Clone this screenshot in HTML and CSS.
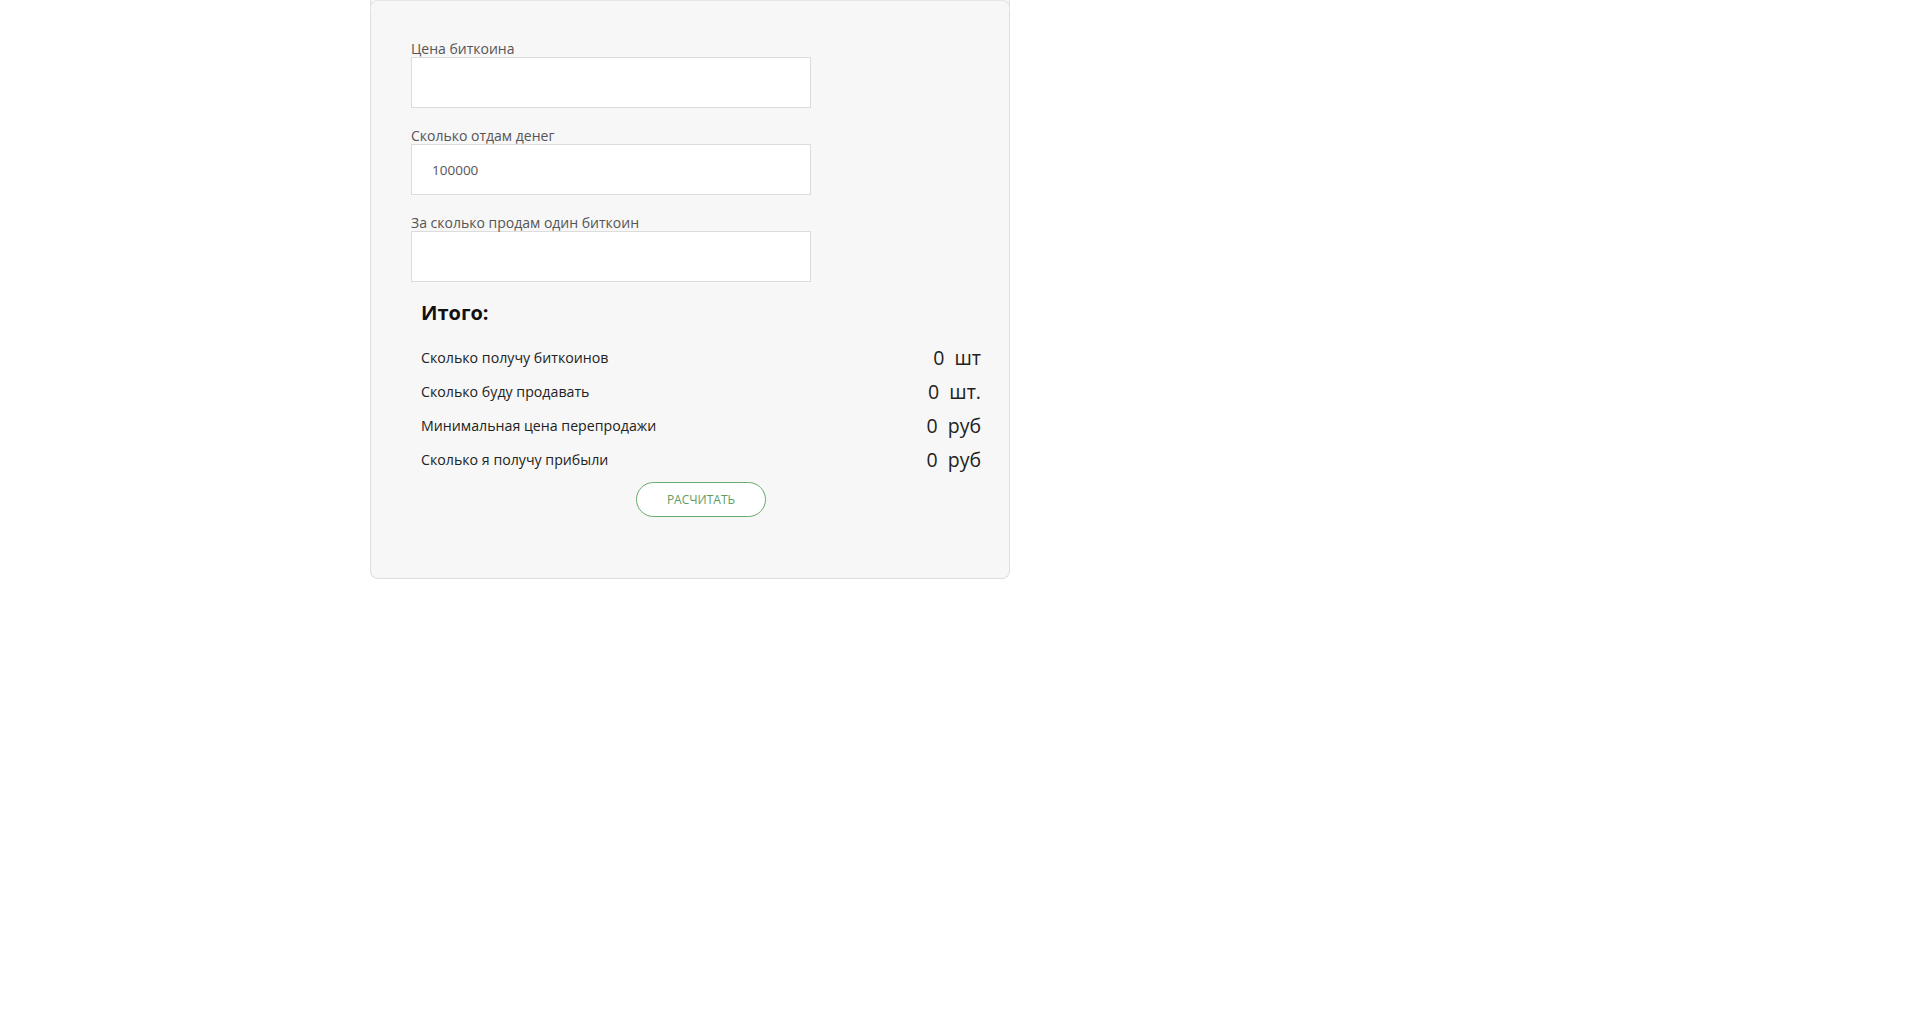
FILE: index.html
```
<!DOCTYPE html>
<html lang="ru">
<head>
<meta charset="utf-8">
<title>Калькулятор биткоина</title>
<link rel="stylesheet" href="styles.css">
</head>
<body>
<div class="card">
  <div class="field">
    <label class="label">Цена биткоина</label>
    <input class="input" type="text" value="">
  </div>
  <div class="field">
    <label class="label">Сколько отдам денег</label>
    <input class="input" type="text" value="100000">
  </div>
  <div class="field">
    <label class="label">За сколько продам один биткоин</label>
    <input class="input" type="text" value="">
  </div>
  <div class="results">
    <h2 class="total">Итого:</h2>
    <div class="row"><span class="row-label">Сколько получу биткоинов</span><span class="row-value">0&nbsp; шт</span></div>
    <div class="row"><span class="row-label">Сколько буду продавать</span><span class="row-value">0&nbsp; шт.</span></div>
    <div class="row"><span class="row-label">Минимальная цена перепродажи</span><span class="row-value">0&nbsp; руб</span></div>
    <div class="row"><span class="row-label">Сколько я получу прибыли</span><span class="row-value">0&nbsp; руб</span></div>
    <div class="actions"><button class="btn" type="button">Расчитать</button></div>
  </div>
</div>
</body>
</html>
```

FILE: styles.css
```
html, body {
  margin: 0;
  padding: 0;
  background: #ffffff;
}
body {
  font-family: "Open Sans", "Noto Sans", sans-serif;
}
.card {
  margin-left: 370px;
  width: 640px;
  box-sizing: border-box;
  min-height: 579px;
  background: #f7f7f7;
  border: 1px solid #dedede;
  border-top: none;
  border-radius: 0 0 8px 8px;
  padding: 39px 28px 60px 40px;
  position: relative;
}
.card::before {
  content: "";
  position: absolute;
  left: -1px;
  right: -1px;
  top: 0;
  height: 10px;
  border: 1px solid #e6e6e6;
  border-bottom: none;
  border-radius: 8px 8px 0 0;
}
.field {
  margin-bottom: 18px;
}
.label {
  display: block;
  font-size: 14px;
  line-height: 16px;
  padding-top: 2px;
  color: #555555;
}
.input {
  display: block;
  width: 400px;
  height: 51px;
  box-sizing: border-box;
  border: 1px solid #dcdcdc;
  background: #ffffff;
  padding: 0 20px;
  font-family: "Open Sans", "Noto Sans", sans-serif;
  font-size: 13.5px;
  color: #555555;
  outline: none;
  margin: 0;
}
.results {
  padding-left: 10px;
  margin-top: -1px;
}
.total {
  margin: 0 0 14px 0;
  font-size: 20px;
  line-height: 28px;
  font-weight: 700;
  color: #111111;
}
.row {
  display: flex;
  justify-content: space-between;
  align-items: center;
  height: 34px;
}
.row-label {
  font-size: 14.2px;
  line-height: 20px;
  color: #222222;
}
.row-value {
  font-size: 19.5px;
  line-height: 24px;
  color: #222222;
}
.actions {
  display: flex;
  justify-content: center;
  margin-top: 5px;
}
.btn {
  width: 130px;
  height: 35px;
  box-sizing: border-box;
  border: 1px solid #6aa96f;
  border-radius: 18px;
  background: #ffffff;
  color: #5d9d63;
  font-family: "Open Sans", "Noto Sans", sans-serif;
  font-size: 12px;
  text-transform: uppercase;
  padding: 0;
  cursor: pointer;
}
```
